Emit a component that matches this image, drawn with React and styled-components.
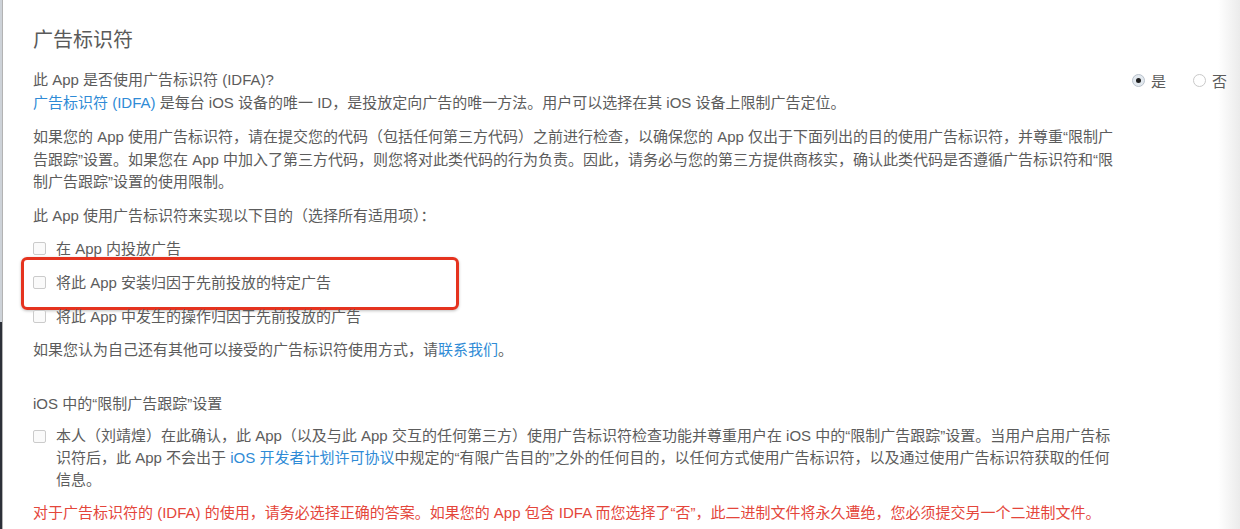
import React from 'react';
import styled, { createGlobalStyle } from 'styled-components';

const GlobalStyle = createGlobalStyle`
  html, body {
    margin: 0;
    padding: 0;
    background: #fff;
  }
  body {
    font-family: 'Liberation Sans', 'Noto Sans CJK SC', sans-serif;
    color: #5c5c5c;
    -webkit-font-smoothing: antialiased;
  }
`;

const Page = styled.div`
  display: flex;
  min-height: 529px;
  background: linear-gradient(to right, #fff calc(100% - 22px), #ebebeb);
`;

const Rail = styled.div`
  width: 2px;
  flex-shrink: 0;
  background: linear-gradient(to bottom, #cdd2d8 0, #cdd2d8 322px, #2c3039 322px);
  border-right: 1px solid #b3b3b3;
`;

const Main = styled.div`
  flex: 1;
  padding: 26px 12px 0 30px;
`;

const Title = styled.h1`
  margin: 0;
  font-size: 20px;
  line-height: 28px;
  font-weight: 400;
  color: #5a5a5a;
`;

const QuestionRow = styled.div`
  display: flex;
  justify-content: space-between;
  align-items: flex-start;
  margin-top: 15px;
`;

const Text = styled.p`
  margin: ${(p) => p.$mt || 0}px 0 0;
  max-width: ${(p) => p.$width || 1086}px;
  font-size: 15px;
  line-height: ${(p) => p.$lh || 22}px;
  color: ${(p) => (p.$red ? '#e4463b' : '#5c5c5c')};
`;

const Link = styled.a`
  color: #2f8bd6;
  text-decoration: none;
`;

const RadioGroup = styled.div`
  display: flex;
  align-items: center;
  gap: 27px;
  height: 22px;
  padding-right: 1px;
`;

const RadioLabel = styled.label`
  display: flex;
  align-items: center;
  gap: 6px;
  font-size: 15px;
  color: #5c5c5c;
`;

const RadioDot = styled.span`
  width: 13px;
  height: 13px;
  box-sizing: border-box;
  border-radius: 50%;
  border: 1px solid ${(p) => (p.$on ? '#b9c2cc' : '#c9c9c9')};
  background: ${(p) => (p.$on ? '#e3e9ef' : '#fff')};
  display: flex;
  align-items: center;
  justify-content: center;

  &::after {
    content: '';
    width: 5px;
    height: 5px;
    border-radius: 50%;
    background: #1f1f1f;
    display: ${(p) => (p.$on ? 'block' : 'none')};
  }
`;

const CheckList = styled.div`
  margin-top: 5px;
`;

const CheckRow = styled.div`
  position: relative;
  display: flex;
  align-items: flex-start;
  gap: 10px;
  padding: ${(p) => (p.$tight ? 0 : 6)}px 0;
  margin-top: ${(p) => p.$mt || 0}px;
`;

const Box = styled.span`
  flex-shrink: 0;
  width: 13px;
  height: 13px;
  box-sizing: border-box;
  margin-top: ${(p) => p.$top || 4}px;
  border: 1px solid #cbcbcb;
  border-radius: 2px;
  background: #fafafa;
`;

const RowText = styled.span`
  font-size: 15px;
  line-height: 22px;
  color: #5c5c5c;
`;

const Highlight = styled.div`
  position: absolute;
  left: -12px;
  top: -9px;
  width: 438px;
  height: 53px;
  box-sizing: border-box;
  border: 3px solid #e5331f;
  border-radius: 6px;
  box-shadow: 0 1px 3px rgba(0, 0, 0, 0.25);
  pointer-events: none;
`;

const Heading = styled.p`
  margin: 32px 0 0;
  font-size: 15px;
  line-height: 22px;
  color: #5c5c5c;
`;

export default function App() {
  return (
    <>
      <GlobalStyle />
      <Page>
        <Rail />
        <Main>
          <Title>广告标识符</Title>
          <QuestionRow>
            <Text>此 App 是否使用广告标识符 (IDFA)?</Text>
            <RadioGroup>
              <RadioLabel>
                <RadioDot $on />是
              </RadioLabel>
              <RadioLabel>
                <RadioDot />否
              </RadioLabel>
            </RadioGroup>
          </QuestionRow>
          <Text $lh={23}>
            <Link>广告标识符 (IDFA)</Link> 是每台 iOS 设备的唯一 ID，是投放定向广告的唯一方法。用户可以选择在其 iOS 设备上限制广告定位。
          </Text>
          <Text $mt={12} $lh={22.5}>
            如果您的 App 使用广告标识符，请在提交您的代码（包括任何第三方代码）之前进行检查，以确保您的 App 仅出于下面列出的目的使用广告标识符，并尊重“限制广告跟踪”设置。如果您在 App 中加入了第三方代码，则您将对此类代码的行为负责。因此，请务必与您的第三方提供商核实，确认此类代码是否遵循广告标识符和“限制广告跟踪”设置的使用限制。
          </Text>
          <Text $mt={11}>此 App 使用广告标识符来实现以下目的（选择所有适用项）：</Text>
          <CheckList>
            <CheckRow>
              <Box />
              <RowText>在 App 内投放广告</RowText>
            </CheckRow>
            <CheckRow>
              <Box />
              <RowText>将此 App 安装归因于先前投放的特定广告</RowText>
              <Highlight />
            </CheckRow>
            <CheckRow>
              <Box />
              <RowText>将此 App 中发生的操作归因于先前投放的广告</RowText>
            </CheckRow>
          </CheckList>
          <Text $mt={5}>
            如果您认为自己还有其他可以接受的广告标识符使用方式，请<Link>联系我们</Link>。
          </Text>
          <Heading>iOS 中的“限制广告跟踪”设置</Heading>
          <CheckRow $tight $mt={10}>
            <Box $top={5} />
            <Text $width={1066} $lh={22}>
              本人（刘靖煌）在此确认，此 App（以及与此 App 交互的任何第三方）使用广告标识符检查功能并尊重用户在 iOS 中的“限制广告跟踪”设置。当用户启用广告标识符后，此 App 不会出于 <Link>iOS 开发者计划许可协议</Link>中规定的“有限广告目的”之外的任何目的，以任何方式使用广告标识符，以及通过使用广告标识符获取的任何信息。
            </Text>
          </CheckRow>
          <Text $mt={11} $red>
            对于广告标识符的 (IDFA) 的使用，请务必选择正确的答案。如果您的 App 包含 IDFA 而您选择了“否”，此二进制文件将永久遭绝，您必须提交另一个二进制文件。
          </Text>
        </Main>
      </Page>
    </>
  );
}
